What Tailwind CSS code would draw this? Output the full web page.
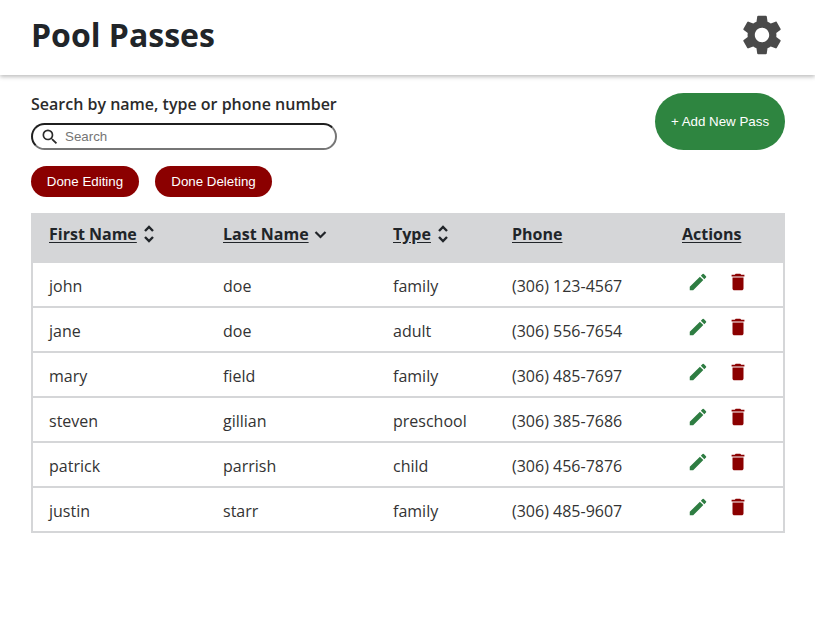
<!DOCTYPE html>
<html lang="en">
<head>
  <meta charset="UTF-8" />
  <title>Pool Passes</title>
  <meta name="viewport" content="width=device-width, initial-scale=1.0" />
  <script src="https://cdn.jsdelivr.net/npm/@tailwindcss/browser@4"></script>
</head>
<body class="bg-white min-h-screen text-[#212529] font-['Open_Sans',sans-serif]">
  <!-- Header -->
  <header class="h-[75px] bg-white shadow-[0_2px_4px_rgba(0,0,0,0.25)] pl-[31px] pr-[29px] pb-[6px] flex justify-between items-center">
    <h1 class="text-[32px] font-bold text-[#212529]">Pool Passes</h1>
    <svg class="w-[48px] h-[48px]" viewBox="0 0 24 24" fill="#4a4a4a">
      <path d="M19.14 12.94c.04-.3.06-.61.06-.94 0-.32-.02-.64-.07-.94l2.03-1.58c.18-.14.23-.41.12-.61l-1.92-3.32c-.12-.22-.37-.29-.59-.22l-2.39.96c-.5-.38-1.03-.7-1.62-.94l-.36-2.54c-.04-.24-.24-.41-.48-.41h-3.84c-.24 0-.43.17-.47.41l-.36 2.54c-.59.24-1.13.57-1.62.94l-2.39-.96c-.22-.08-.47 0-.59.22L2.74 8.87c-.12.21-.08.47.12.61l2.03 1.58c-.05.3-.09.63-.09.94s.02.64.07.94l-2.03 1.58c-.18.14-.23.41-.12.61l1.92 3.32c.12.22.37.29.59.22l2.39-.96c.5.38 1.03.7 1.62.94l.36 2.54c.05.24.24.41.48.41h3.84c.24 0 .44-.17.47-.41l.36-2.54c.59-.24 1.13-.56 1.62-.94l2.39.96c.22.08.47 0 .59-.22l1.92-3.32c.12-.22.07-.47-.12-.61l-2.01-1.58zM12 15.6c-1.98 0-3.6-1.62-3.6-3.6s1.62-3.6 3.6-3.6 3.6 1.62 3.6 3.6-1.62 3.6-3.6 3.6z"/>
    </svg>
  </header>

  <main class="pl-[31px] pr-[30px]">
    <div class="flex justify-between pt-[18px]">
      <div>
        <label class="block -mt-[1px] text-[16px] font-semibold leading-[24px] text-[#2b2b2b]">Search by name, type or phone number</label>
        <div class="mt-[7px] w-[306px] h-[27px] rounded-full border-2 border-t-[#1f1f1f] border-l-[#1f1f1f] border-r-[#767676] border-b-[#767676] flex items-center pl-[7px]">
          <svg class="w-[20px] h-[20px]" viewBox="0 0 24 24" fill="#2b2b2b"><path d="M15.5 14h-.79l-.28-.27A6.47 6.47 0 0 0 16 9.5 6.5 6.5 0 1 0 9.5 16c1.61 0 3.09-.59 4.23-1.57l.27.28v.79l5 4.99L20.49 19l-4.99-5zm-6 0C7.01 14 5 11.99 5 9.5S7.01 5 9.5 5 14 7.01 14 9.5 11.99 14 9.5 14z"/></svg>
          <span class="ml-[5px] text-[13.33px] font-['Liberation_Sans',sans-serif] text-[#757575]">Search</span>
        </div>
        <div class="flex gap-[16px] mt-[16px]">
          <button class="h-[31px] w-[108px] rounded-full bg-[#8b0000] text-white text-[13.33px] font-['Liberation_Sans',sans-serif]">Done Editing</button>
          <button class="h-[31px] w-[117px] rounded-full bg-[#8b0000] text-white text-[13.33px] font-['Liberation_Sans',sans-serif]">Done Deleting</button>
        </div>
      </div>
      <button class="h-[57px] w-[130px] rounded-full bg-[#2e8540] text-white text-[13.33px] font-['Liberation_Sans',sans-serif]">+ Add New Pass</button>
    </div>

    <table class="mt-[16px] w-[754px] table-fixed border-separate border-spacing-0 text-[16px]">
      <colgroup>
        <col class="w-[174px]" /><col class="w-[170px]" /><col class="w-[119px]" /><col class="w-[170px]" /><col class="w-[121px]" />
      </colgroup>
      <thead>
        <tr class="bg-[#d5d6d8] h-[50px] text-left">
          <th class="pl-[18px] pb-[8px] font-bold"><span class="inline-flex items-center gap-[3px]"><span class="underline underline-offset-2">First Name</span><svg class="w-[18px] h-[24px]" viewBox="0 0 18 24" fill="none" stroke="#212529" stroke-width="2.4"><path d="M5 9l4-4 4 4M5 15l4 4 4-4"/></svg></span></th>
          <th class="pl-[18px] pb-[8px] font-bold"><span class="inline-flex items-center gap-[3px]"><span class="underline underline-offset-2">Last Name</span><svg class="w-[18px] h-[24px]" viewBox="0 0 18 24" fill="none" stroke="#212529" stroke-width="2.2"><path d="M3.500 10l5 5 5-5"/></svg></span></th>
          <th class="pl-[18px] pb-[8px] font-bold"><span class="inline-flex items-center gap-[3px]"><span class="underline underline-offset-2">Type</span><svg class="w-[18px] h-[24px]" viewBox="0 0 18 24" fill="none" stroke="#212529" stroke-width="2.4"><path d="M5 9l4-4 4 4M5 15l4 4 4-4"/></svg></span></th>
          <th class="pl-[18px] pb-[8px] font-bold"><span class="underline underline-offset-2">Phone</span></th>
          <th class="pl-[18px] pb-[8px] font-bold"><span class="underline underline-offset-2">Actions</span></th>
        </tr>
      </thead>
      <tbody id="rows"></tbody>
    </table>
  </main>

  <script>
    const passes = [
      ["john", "doe", "family", "(306) 123-4567"],
      ["jane", "doe", "adult", "(306) 556-7654"],
      ["mary", "field", "family", "(306) 485-7697"],
      ["steven", "gillian", "preschool", "(306) 385-7686"],
      ["patrick", "parrish", "child", "(306) 456-7876"],
      ["justin", "starr", "family", "(306) 485-9607"]
    ];

    const pencil = `<svg class="w-[22px] h-[22px]" viewBox="0 0 24 24" fill="#2e7d42"><path d="M3 17.25V21h3.750L17.810 9.940l-3.750-3.750L3 17.250zM20.710 7.040a1 1 0 0 0 0-1.410l-2.340-2.340a1 1 0 0 0-1.410 0l-1.830 1.830 3.750 3.750 1.830-1.830z"/></svg>`;
    const trash = `<svg class="w-[22px] h-[22px]" viewBox="0 0 24 24" fill="#8b0000"><path d="M6 19c0 1.100.9 2 2 2h8c1.100 0 2-.9 2-2V7H6v12zM19 4h-3.500l-1-1h-5l-1 1H5v2h14V4z"/></svg>`;

    document.getElementById("rows").innerHTML = passes.map(p => `
      <tr class="h-[45px] text-[#333]">
        ${p.map(v => `<td class="pl-[18px] pt-[2px] border-b-2 border-[#d5d6d8] first:border-l-2 first:pl-[16px]">${v}</td>`).join("")}
        <td class="pl-[18px] border-b-2 border-r-2 border-[#d5d6d8]"><div class="flex gap-[18px] pl-[5px] pb-[5px]">${pencil}${trash}</div></td>
      </tr>`).join("");
  </script>
</body>
</html>
